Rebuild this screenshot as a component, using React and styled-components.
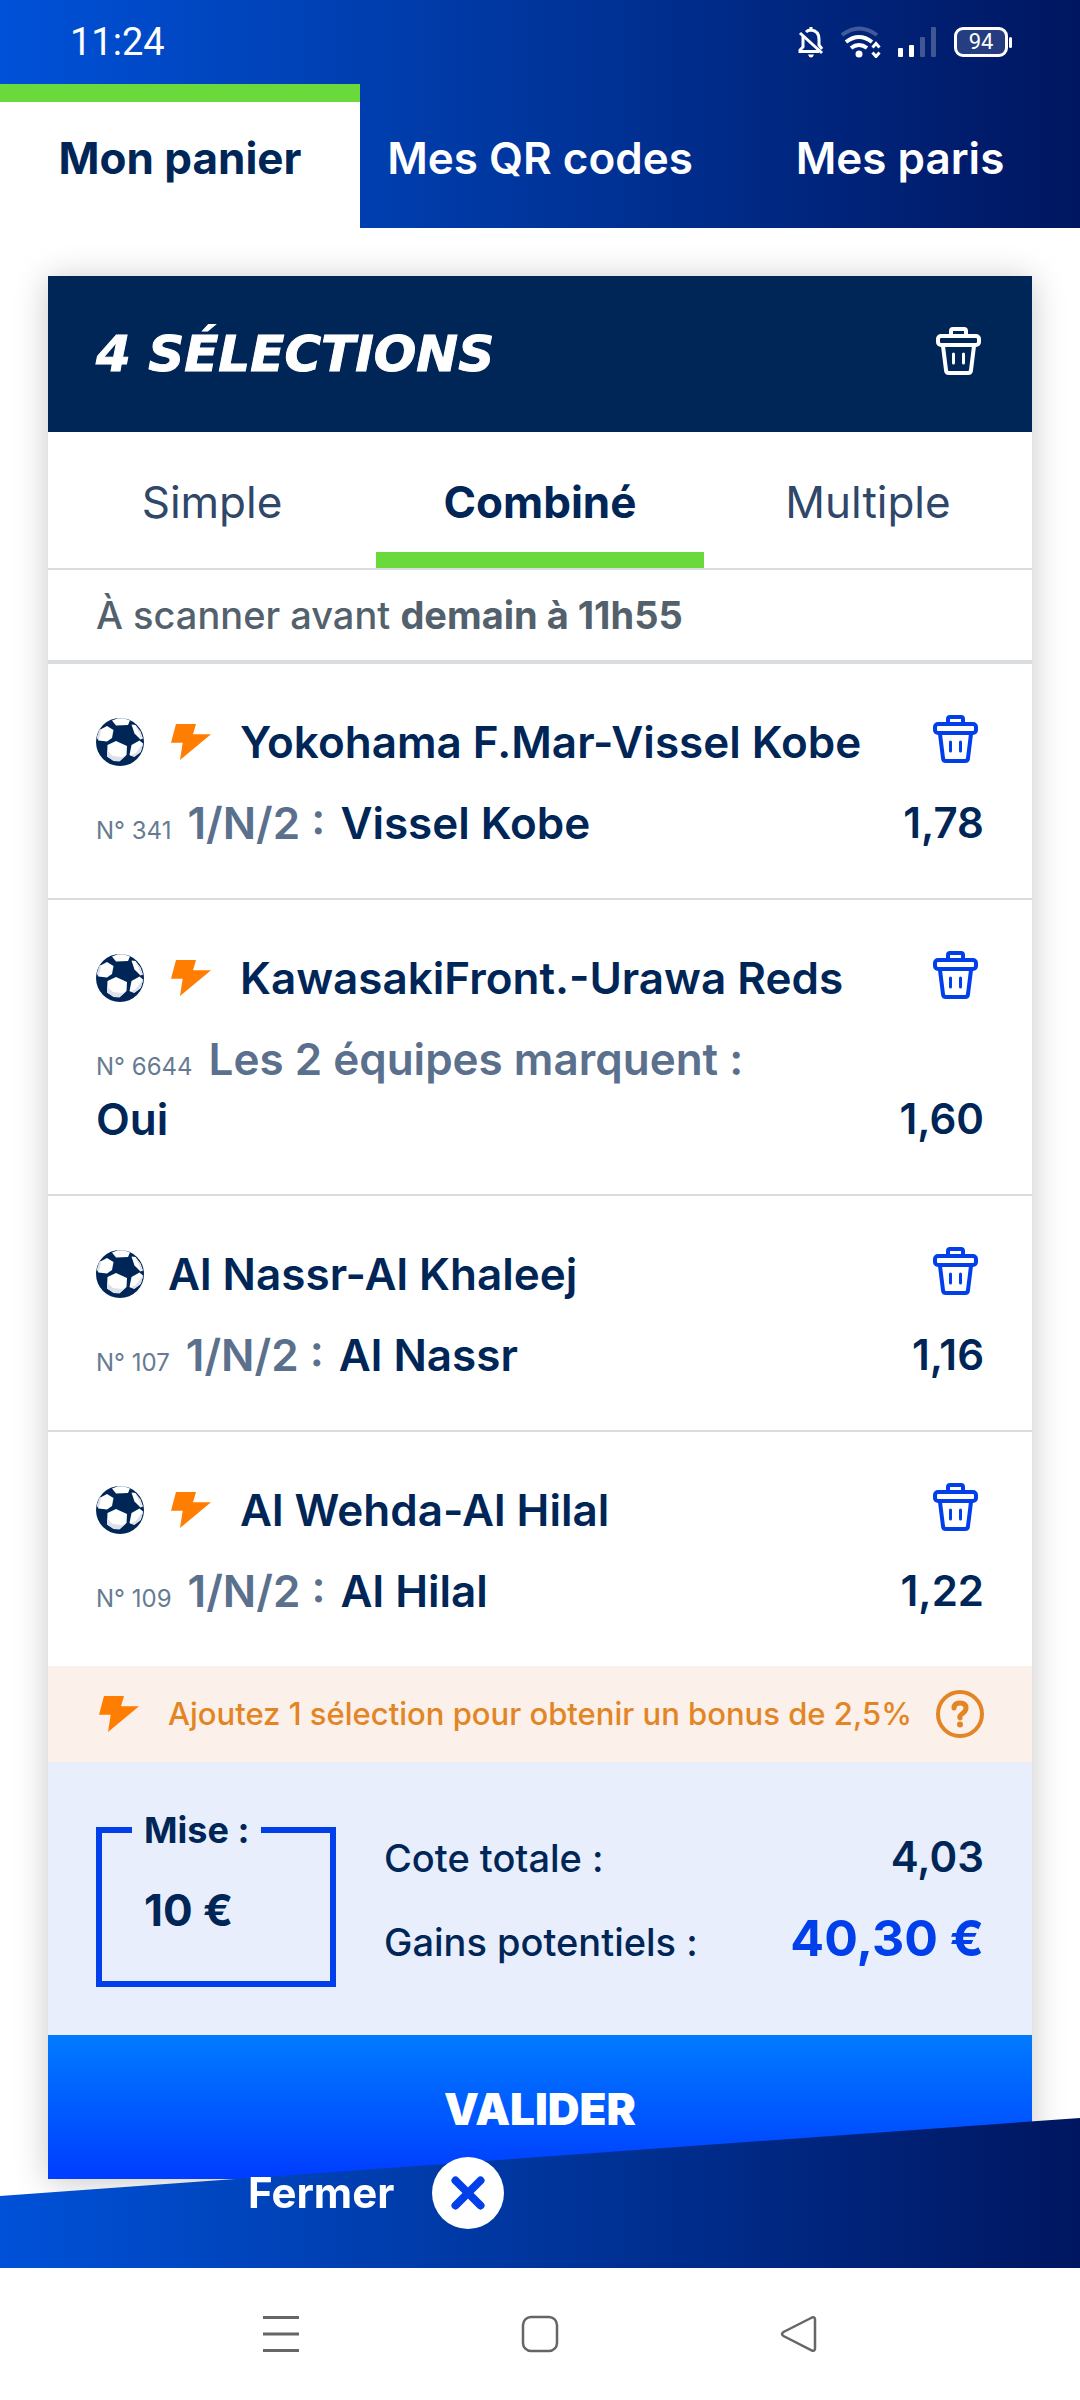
import React, { useState } from "react";
import styled, { createGlobalStyle, css } from "styled-components";

const NAVY = "#002657";
const BLUE = "#003fea";
const GREEN = "#6ad93c";
const ORANGE = "#ff7d00";
const LINE = "#dadddf";
const BAND = "linear-gradient(90deg, #0051d8 0%, #00359c 50%, #001660 100%)";

const GlobalStyle = createGlobalStyle`
    * {
        box-sizing: border-box;
    }

    body {
        margin: 0;
        background: #fff;
        color: ${NAVY};
        font-family: Inter, "Open Sans", sans-serif;
        font-size: 44px;
        font-weight: 600;
        line-height: 60px;
    }

    button,
    input {
        font: inherit;
        color: inherit;
        background: none;
        border: none;
        padding: 0;
        margin: 0;
    }

    button {
        cursor: pointer;
    }

    svg {
        display: block;
        flex: none;
    }
`;

const Header = styled.header`
    background: ${BAND};
    color: #fff;
`;

const StatusBar = styled.div`
    display: flex;
    align-items: center;
    justify-content: space-between;
    height: 84px;
    padding: 0 72px 0 70px;
    font-family: Roboto, sans-serif;
    font-size: 38px;
    font-weight: 400;
`;

const StatusIcons = styled.div`
    display: flex;
    align-items: center;
    gap: 16px;
`;

const Battery = styled.div`
    position: relative;
    display: flex;
    align-items: center;
    justify-content: center;
    width: 54px;
    height: 30px;
    border: 3px solid #fff;
    border-radius: 9px;
    background: rgba(255, 255, 255, 0.15);
    font-size: 22px;
    line-height: 24px;

    &::after {
        content: "";
        position: absolute;
        right: -7px;
        width: 3px;
        height: 11px;
        border-radius: 2px;
        background: #fff;
    }
`;

const MainTabs = styled.nav`
    display: grid;
    grid-template-columns: repeat(3, 1fr);
`;

const MainTab = styled.a`
    display: flex;
    align-items: center;
    justify-content: center;
    height: 144px;
    padding-top: 3px;
    color: #fff;
    text-decoration: none;
    white-space: nowrap;

    ${(props) =>
        props.$active &&
        css`
            background: #fff;
            color: ${NAVY};
            font-weight: 700;
            box-shadow: inset 0 18px 0 ${GREEN};
        `}
`;

const Main = styled.main`
    padding: 48px 48px 220px;
`;

const Card = styled.section`
    background: #fff;
    box-shadow: 0 3px 32px rgba(0, 0, 0, 0.22);
`;

const CardHeader = styled.div`
    display: flex;
    align-items: center;
    justify-content: space-between;
    height: 156px;
    padding: 0 48px;
    background: ${NAVY};
    color: #fff;
`;

const CardTitle = styled.h1`
    margin: 0;
    font-family: "DejaVu Sans", sans-serif;
    font-size: 50px;
    font-weight: 700;
    font-style: italic;
    -webkit-text-stroke: 1px currentColor;
`;

const BetTabs = styled.div`
    display: grid;
    grid-template-columns: repeat(3, 1fr);
    border-bottom: 2px solid ${LINE};
`;

const BetTab = styled.button`
    height: 136px;
    padding-top: 4px;
    color: #2f4769;
    font-weight: 400;

    ${(props) =>
        props.$active &&
        css`
            color: ${NAVY};
            font-weight: 700;
            box-shadow: inset 0 -16px 0 ${GREEN};
        `}
`;

const Deadline = styled.p`
    margin: 0;
    padding: 15px 48px;
    border-bottom: 4px solid ${LINE};
    color: #53616c;
    font-size: 38px;
    font-weight: 500;
`;

const BetList = styled.ul`
    margin: 0;
    padding: 0;
    list-style: none;
`;

const BetItem = styled.li`
    display: grid;
    gap: 21px;
    padding: 48px 48px 45px;

    & + & {
        border-top: 2px solid ${LINE};
    }
`;

const BetHead = styled.div`
    display: flex;
    align-items: center;
    gap: 24px;
`;

const Match = styled.h2`
    flex: 1;
    margin: 0;
    font-size: 44px;
    font-weight: 600;
    white-space: nowrap;
`;

const TrashButton = styled.button`
    display: flex;
    align-items: flex-start;
    height: 54px;
    margin-right: ${(props) => (props.$light ? "0" : "3px")};
    color: ${(props) => (props.$light ? "#fff" : BLUE)};
`;

const BetBody = styled.div`
    display: flex;
    align-items: flex-end;
    justify-content: space-between;
`;

const Pick = styled.p`
    flex: 1;
    margin: 0;
`;

const BetNumber = styled.span`
    margin-right: 16px;
    color: #667b93;
    font-size: 24px;
    font-weight: 400;
    line-height: 24px;
`;

const Market = styled.span`
    margin-right: 4px;
    color: #5a708d;
`;

const Odds = styled.span`
    flex: 0 0 168px;
    font-size: 42px;
    text-align: right;
`;

const Bonus = styled.div`
    display: flex;
    align-items: center;
    gap: 24px;
    height: 96px;
    padding: 0 48px;
    background: #fbf0ea;
    color: #e38524;
    font-size: 31px;
    font-weight: 500;
    white-space: nowrap;
`;

const BonusText = styled.span`
    flex: 1;
`;

const Summary = styled.div`
    display: flex;
    gap: 48px;
    padding: 48px;
    background: #e8eefb;
`;

const Stake = styled.fieldset`
    width: 240px;
    height: 177px;
    margin: 0;
    padding: 30px 42px 0;
    border: 6px solid ${BLUE};
    font-weight: 700;
`;

const StakeLegend = styled.legend`
    margin-left: -12px;
    padding: 0 12px;
    font-size: 36px;
    line-height: 40px;
`;

const StakeInput = styled.input`
    display: block;
    width: 100%;
    height: 60px;
    outline: none;
`;

const Totals = styled.dl`
    flex: 1;
    display: grid;
    gap: 20px;
    align-content: start;
    margin: 0;
    padding-top: 17px;
`;

const TotalRow = styled.div`
    display: flex;
    align-items: baseline;
    justify-content: space-between;

    dt {
        font-size: 38px;
        font-weight: 500;
    }

    dd {
        margin: 0;
        font-size: 42px;
        ${(props) =>
            props.$strong &&
            css`
                color: ${BLUE};
                font-size: 50px;
                font-weight: 700;
            `}
    }
`;

const ValidateButton = styled.button`
    display: block;
    width: 100%;
    height: 144px;
    padding-top: 4px;
    background: linear-gradient(180deg, #007bff 0%, #003cff 100%);
    color: #fff;
    font-weight: 900;
`;

const BottomBar = styled.footer`
    position: fixed;
    right: 0;
    bottom: 0;
    left: 0;
`;

/* the close button pokes out over the slanted edge, so only the band behind it is clipped */
const CloseBar = styled.div`
    position: relative;
    display: flex;
    align-items: flex-start;
    height: 150px;
    padding: 39px 0 0 248px;

    &::before {
        content: "";
        position: absolute;
        inset: 0;
        background: ${BAND};
        clip-path: polygon(0 78px, 100% 0, 100% 100%, 0 100%);
    }
`;

const CloseButton = styled.button`
    position: relative;
    display: flex;
    align-items: center;
    gap: 38px;
    color: #fff;
    font-size: 42px;
    font-weight: 700;
`;

const SystemNav = styled.nav`
    background: #fff;
`;

const SystemKeys = styled.div`
    display: grid;
    grid-template-columns: repeat(3, 1fr);
    align-items: center;
    justify-items: center;
    width: 72%;
    height: 132px;
    margin: 0 auto;
`;

const TrashIcon = () => (
    <svg width="48" height="48" viewBox="0 0 48 48" fill="none" stroke="currentColor" strokeWidth="4">
        <path d="M15 8V4q0-2 2-2h11q2 0 2 2v4" />
        <rect x="2" y="9" width="41" height="9" rx="3" />
        <path d="M7 19l3 24q0 3 3 3h19q3 0 3-3l3-24" />
        <path d="M17.500 27v9M27.500 27v9" strokeWidth="3" strokeLinecap="round" />
    </svg>
);

const BoltIcon = () => (
    <svg width="48" height="48" viewBox="0 0 48 48" fill={ORANGE}>
        <path d="M8 6h20l-3 10.300h18L12 42l2.700-17.300H3z" />
    </svg>
);

const BallIcon = () => (
    <svg width="48" height="48" viewBox="0 0 48 48">
        <circle cx="24" cy="24" r="24" fill={NAVY} />
        <path d="M16 2.500L22 .3h6l6 2.200-2 4.500-12 .5z" fill="#fff" />
        <path d="M3.500 12L11 8l6.500 4-1.500 8-5 3.500-8.500-1-1.500-3z" fill="#fff" />
        <path d="M3 13l2-2.500L4.500 16l-2 6.500-1.500-3z" fill="#dfe1ea" />
        <path d="M35.500 6.500l4 .5 5 6.500 2.500 7-2.500 1-6-6z" fill="#fff" />
        <path d="M39 7l5 6.500 2.500 7-1.500.5-2-6z" fill="#dfe1ea" />
        <path d="M11.500 27l8.500-4 11 5-.5 9-7 6-6-.5-6.500-4z" fill="#fff" />
        <path d="M11 32.500l6 5.500 9 1 4-1.500-6.500 6-6-.5-6.500-4.500z" fill="#dfe1ea" />
        <path d="M35.500 27l8-4.500 3.500 3-2 8-6.500 5-5-1.500z" fill="#fff" />
        <path d="M46.500 26l.3 1.500-2.500 7-6 4.500-4.500-1.500 6-2.500z" fill="#dfe1ea" />
    </svg>
);

const HelpIcon = () => (
    <svg width="48" height="48" viewBox="0 0 48 48" fill="none" stroke="currentColor" strokeWidth="4">
        <circle cx="24" cy="24" r="22" />
        <path d="M18 18q0-5 6-5t6 5q0 3-3.500 5.500T24 28" strokeWidth="5" strokeLinecap="round" />
        <circle cx="24" cy="34.500" r="3" fill="currentColor" stroke="none" />
    </svg>
);

const CrossIcon = () => (
    <svg width="72" height="72" viewBox="0 0 72 72">
        <circle cx="36" cy="36" r="36" fill="#fff" />
        <path d="M23.500 23.500l25 25M48.500 23.500l-25 25" stroke={BLUE} strokeWidth="8" strokeLinecap="round" />
    </svg>
);

const BellOffIcon = () => (
    <svg width="28" height="32" viewBox="0 0 28 32" fill="none" stroke="#fff" strokeWidth="3">
        <path d="M9 6q2-2 5-2 8 1 8 9v6l3 4M6 9.500V21l-3 3v1.500h19" />
        <path d="M3 7l22 20M14 1v3" />
        <path d="M11 28.500h6q-1 3-3 3t-3-3z" fill="#fff" stroke="none" />
    </svg>
);

const WifiIcon = () => (
    <svg width="41" height="32" viewBox="0 0 41 32" fill="none" stroke="#fff" strokeWidth="4">
        <path d="M1 9q17-13 35 0" opacity="0.25" />
        <path d="M5 16q13-10 26 0M10 22q8-6 16 0" />
        <circle cx="18" cy="28" r="3.500" fill="#fff" stroke="none" />
        <path d="M31.500 21.500l3.500-4 3.500 4M31.500 26.500l3.500 4 3.500-4" strokeWidth="3" />
    </svg>
);

const SignalIcon = () => (
    <svg width="40" height="30" viewBox="0 0 40 30" fill="#fff">
        <rect x="0" y="21" width="5" height="9" rx="1" />
        <rect x="11" y="18" width="5" height="12" rx="1" />
        <rect x="22" y="10" width="5" height="20" rx="1" opacity="0.25" />
        <rect x="33" y="0" width="5" height="30" rx="1" opacity="0.25" />
    </svg>
);

const MenuKey = () => (
    <svg width="38" height="38" viewBox="0 0 38 38" stroke="#666" strokeWidth="3">
        <path d="M1 2.500h36M1 19h36M1 35.500h36" />
    </svg>
);

const HomeKey = () => (
    <svg width="38" height="38" viewBox="0 0 38 38" fill="none" stroke="#666" strokeWidth="2.5">
        <rect x="2" y="2" width="34" height="34" rx="8" />
    </svg>
);

const BackKey = () => (
    <svg width="38" height="38" viewBox="0 0 38 38" fill="none" stroke="#666" strokeWidth="2.5">
        <path d="M32 2.500L3.500 17q-3 2 0 4L32 35.500q3 1 3-2v-29q0-3-3-2z" />
    </svg>
);

const mainTabs = ["Mon panier", "Mes QR codes", "Mes paris"];
const betTabs = ["Simple", "Combiné", "Multiple"];

const bets = [
    { number: 341, match: "Yokohama F.Mar-Vissel Kobe", market: "1/N/2 :", pick: "Vissel Kobe", odds: "1,78", boosted: true },
    { number: 6644, match: "KawasakiFront.-Urawa Reds", market: "Les 2 équipes marquent :", pick: "Oui", odds: "1,60", boosted: true },
    { number: 107, match: "Al Nassr-Al Khaleej", market: "1/N/2 :", pick: "Al Nassr", odds: "1,16", boosted: false },
    { number: 109, match: "Al Wehda-Al Hilal", market: "1/N/2 :", pick: "Al Hilal", odds: "1,22", boosted: true },
];

function Bet({ bet, onRemove }) {
    return (
        <BetItem>
            <BetHead>
                <BallIcon />
                {bet.boosted && <BoltIcon />}
                <Match>{bet.match}</Match>
                <TrashButton aria-label="Supprimer" onClick={() => onRemove(bet.number)}>
                    <TrashIcon />
                </TrashButton>
            </BetHead>
            <BetBody>
                <Pick>
                    <BetNumber>N° {bet.number}</BetNumber>
                    <Market>{bet.market}</Market> {bet.pick}
                </Pick>
                <Odds>{bet.odds}</Odds>
            </BetBody>
        </BetItem>
    );
}

function App() {
    const [betTab, setBetTab] = useState("Combiné");
    const [selections, setSelections] = useState(bets);
    const [stake, setStake] = useState("10 €");

    const remove = (number) => setSelections(selections.filter((bet) => bet.number !== number));

    return (
        <>
            <GlobalStyle />
            <Header>
                <StatusBar>
                    <span>11:24</span>
                    <StatusIcons>
                        <BellOffIcon />
                        <WifiIcon />
                        <SignalIcon />
                        <Battery>94</Battery>
                    </StatusIcons>
                </StatusBar>
                <MainTabs>
                    {mainTabs.map((tab, i) => (
                        <MainTab key={tab} href="#" $active={i === 0}>
                            {tab}
                        </MainTab>
                    ))}
                </MainTabs>
            </Header>

            <Main>
                <Card>
                    <CardHeader>
                        <CardTitle>{selections.length} SÉLECTIONS</CardTitle>
                        <TrashButton $light aria-label="Tout supprimer" onClick={() => setSelections([])}>
                            <TrashIcon />
                        </TrashButton>
                    </CardHeader>
                    <BetTabs>
                        {betTabs.map((tab) => (
                            <BetTab key={tab} $active={tab === betTab} onClick={() => setBetTab(tab)}>
                                {tab}
                            </BetTab>
                        ))}
                    </BetTabs>
                    <Deadline>
                        À scanner avant <b>demain à 11h55</b>
                    </Deadline>
                    <BetList>
                        {selections.map((bet) => (
                            <Bet key={bet.number} bet={bet} onRemove={remove} />
                        ))}
                    </BetList>
                    <Bonus>
                        <BoltIcon />
                        <BonusText>Ajoutez 1 sélection pour obtenir un bonus de 2,5%</BonusText>
                        <HelpIcon />
                    </Bonus>
                    <Summary>
                        <Stake>
                            <StakeLegend>
                                <label htmlFor="stake">Mise :</label>
                            </StakeLegend>
                            <StakeInput id="stake" value={stake} onChange={(e) => setStake(e.target.value)} />
                        </Stake>
                        <Totals>
                            <TotalRow>
                                <dt>Cote totale :</dt>
                                <dd>4,03</dd>
                            </TotalRow>
                            <TotalRow $strong>
                                <dt>Gains potentiels :</dt>
                                <dd>40,30 €</dd>
                            </TotalRow>
                        </Totals>
                    </Summary>
                    <ValidateButton>VALIDER</ValidateButton>
                </Card>
            </Main>

            <BottomBar>
                <CloseBar>
                    <CloseButton>
                        Fermer
                        <CrossIcon />
                    </CloseButton>
                </CloseBar>
                <SystemNav>
                    <SystemKeys>
                        <MenuKey />
                        <HomeKey />
                        <BackKey />
                    </SystemKeys>
                </SystemNav>
            </BottomBar>
        </>
    );
}

export default App;
